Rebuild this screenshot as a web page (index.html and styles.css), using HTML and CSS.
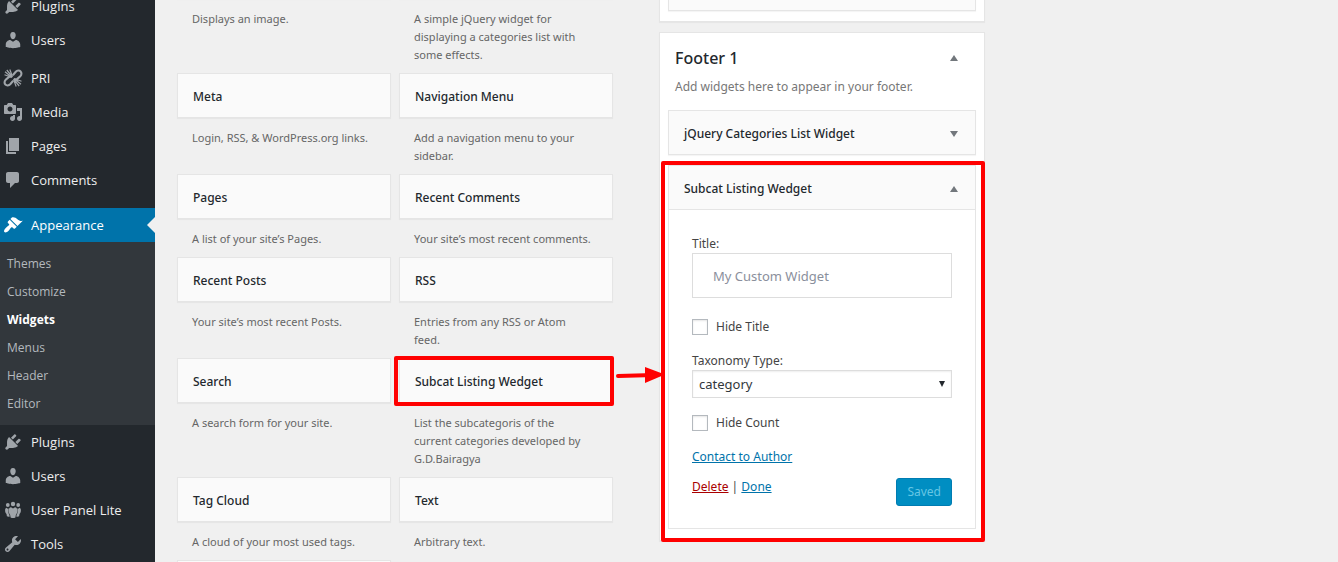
FILE: index.html
```
<!DOCTYPE html>
<html lang="en">
<head>
<meta charset="utf-8">
<title>Widgets</title>
<link rel="stylesheet" href="styles.css">
</head>
<body>
<svg class="sprite" aria-hidden="true">
  <symbol id="plugins" viewBox="0 0 20 20"><path d="M13.11 4.36L9.87 7.6 8 5.73l3.24-3.24c.35-.34 1.05-.2 1.56.32.52.51.66 1.21.31 1.55zm-8 1.77l.91-1.12 9.01 9.01-1.19.84c-.71.71-2.63 1.16-3.82 1.16H6.14L4.9 17.26c-.59.59-1.54.59-2.12 0-.59-.58-.59-1.53 0-2.12l1.24-1.24v-3.88c0-1.13.4-3.19 1.09-3.89zm7.26 3.97l3.24-3.24c.34-.35 1.04-.21 1.55.31.52.51.66 1.21.31 1.55l-3.24 3.25z"/></symbol>
  <symbol id="users" viewBox="0 0 20 20"><path d="M10 9.25c-2.27 0-2.73-3.44-2.73-3.44C7 4.02 7.82 2 9.97 2c2.16 0 2.98 2.02 2.71 3.81 0 0-.41 3.44-2.68 3.44zm0 2.57L12.72 10c2.39 0 4.52 2.33 4.52 4.53v2.49s-3.65 1.13-7.24 1.13c-3.65 0-7.24-1.13-7.24-1.13v-2.49c0-2.25 1.94-4.48 4.47-4.48z"/></symbol>
  <symbol id="unlink" viewBox="0 0 20 20"><g fill="none" stroke="currentColor"><path stroke-width="2.1" d="M9.800 7.200l3-3.500c1.300-1.400 3.600-1.500 4.800-.3s1.100 3.500-.3 4.800l-3 2.700c-.9.7-2 .8-2.900.3M10.200 12.800l-3 3.500c-1.300 1.400-3.600 1.500-4.800.3s-1.100-3.500.3-4.800l3-2.700c.9-.7 2-.8 2.900-.3"/><path stroke-width="1.200" d="M9.500 8.500L6.800 1.500M9.500 9L3.800 2M9 9.500L2 3.800M8.500 9.300L1.500 6.800M10.500 11.500l2.700 7M10.500 11l5.700 7M11 10.500l7 5.700M11.500 10.700l7 2.500"/></g></symbol>
  <symbol id="media" viewBox="0 0 20 20"><path d="M13 11V4c0-.55-.45-1-1-1h-1.670L9 1H5L3.670 3H2c-.55 0-1 .45-1 1v7c0 .55.45 1 1 1h10c.55 0 1-.45 1-1zM7 4.500c1.380 0 2.500 1.120 2.500 2.500S8.380 9.500 7 9.500 4.500 8.380 4.500 7 5.620 4.500 7 4.500zM14 6h5v10.500c0 1.380-1.120 2.500-2.500 2.500S14 17.880 14 16.500s1.120-2.500 2.500-2.500c.17 0 .34.02.5.05V9h-3V6zm-4 8.050V13h2v3.500c0 1.380-1.120 2.500-2.500 2.500S7 17.880 7 16.500 8.120 14 9.500 14c.17 0 .34.02.5.05z"/></symbol>
  <symbol id="pages" viewBox="0 0 20 20"><path d="M6 15V2h10v13H6zm-1 1h8v2H3V5h2v11z"/></symbol>
  <symbol id="comments" viewBox="0 0 20 20"><path d="M5 2h9c1.100 0 2 .9 2 2v7c0 1.100-.9 2-2 2h-2l-5 5v-5H5c-1.100 0-2-.9-2-2V4c0-1.100.9-2 2-2z"/></symbol>
  <symbol id="brush" viewBox="0 0 20 20"><path d="M14.48 11.06L7.41 3.99l1.5-1.5c.5-.56 2.3-.47 3.51.32 1.21.8 1.43 1.28 2.91 2.1 1.18.64 2.45 1.26 4.45.85zm-.71.71L6.7 4.7 4.93 6.47c-.39.39-.39 1.02 0 1.41l1.06 1.06c.39.39.39 1.03 0 1.42-.6.6-1.43 1.11-2.21 1.69-.35.26-.7.53-1.01.84C1.43 14.23.4 16.08 1.4 17.07c.99 1 2.84-.03 4.18-1.36.31-.31.58-.66.85-1.02.57-.78 1.08-1.61 1.69-2.21.39-.39 1.02-.39 1.41 0l1.06 1.06c.39.39 1.02.39 1.41 0z"/></symbol>
  <symbol id="groups" viewBox="0 0 20 20"><circle cx="10" cy="4" r="2.200"/><circle cx="4.800" cy="5" r="1.900"/><circle cx="15.200" cy="5" r="1.900"/><path d="M8 7.200l2 1.300 2-1.300c1.500.2 2.400 1.400 2.400 3 0 2.200-.7 3.600-1.500 4.500l-.5 2.700c-1.400.8-3.400.8-4.800 0l-.5-2.700c-.8-.9-1.500-2.300-1.500-4.500 0-1.600.9-2.800 2.400-3zM3.300 7.700l1.500 1 .8-.4c-.7 2.500-.3 5 .8 6.700l.3 1.500c-1 .3-2 .2-2.800-.3L3.500 14c-.9-.9-1.400-2-1.400-3.500 0-1.400.2-2.300 1.200-2.800zM16.700 7.700l-1.500 1-.8-.4c.7 2.500.3 5-.8 6.700l-.3 1.500c1 .3 2 .2 2.800-.3l.4-2.200c.9-.9 1.400-2 1.400-3.500 0-1.400-.2-2.300-1.200-2.800z"/></symbol>
  <symbol id="tools" viewBox="0 0 20 20"><path d="M16.68 9.77c-1.34 1.34-3.3 1.67-4.95.99l-5.41 6.52c-.99.99-2.59.99-3.58 0s-.99-2.59 0-3.57l6.52-5.42c-.68-1.65-.35-3.61.99-4.95 1.28-1.28 3.12-1.62 4.72-1.06l-2.89 2.89 2.82 2.82 2.86-2.87c.53 1.58.18 3.39-1.08 4.65zM3.81 16.21c.4.39 1.04.39 1.43 0 .4-.4.4-1.04 0-1.43-.39-.4-1.03-.4-1.43 0-.39.39-.39 1.03 0 1.43z"/></symbol>
</svg>
<div class="app">
  <nav class="menu">
    <a class="item" href="#"><svg class="icon"><use href="#plugins"/></svg>Plugins</a>
    <a class="item" href="#"><svg class="icon"><use href="#users"/></svg>Users</a>
    <div class="gap-small"></div>
    <a class="item" href="#"><svg class="icon"><use href="#unlink"/></svg>PRI</a>
    <a class="item" href="#"><svg class="icon"><use href="#media"/></svg>Media</a>
    <a class="item" href="#"><svg class="icon"><use href="#pages"/></svg>Pages</a>
    <a class="item" href="#"><svg class="icon"><use href="#comments"/></svg>Comments</a>
    <div class="gap-large"></div>
    <a class="item current" href="#"><svg class="icon"><use href="#brush"/></svg>Appearance</a>
    <div class="submenu">
      <a href="#">Themes</a>
      <a href="#">Customize</a>
      <a class="active" href="#">Widgets</a>
      <a href="#">Menus</a>
      <a href="#">Header</a>
      <a href="#">Editor</a>
    </div>
    <a class="item" href="#"><svg class="icon"><use href="#plugins"/></svg>Plugins</a>
    <a class="item" href="#"><svg class="icon"><use href="#users"/></svg>Users</a>
    <a class="item" href="#"><svg class="icon"><use href="#groups"/></svg>User Panel Lite</a>
    <a class="item" href="#"><svg class="icon"><use href="#tools"/></svg>Tools</a>
  </nav>

  <main class="content">
    <section class="available">
      <article><h3 class="card"></h3><p class="about">Displays an image.</p></article>
      <article><h3 class="card"></h3><p class="about">A simple jQuery widget for displaying a categories list with some effects.</p></article>
      <article><h3 class="card">Meta</h3><p class="about">Login, RSS, &amp; WordPress.org links.</p></article>
      <article><h3 class="card">Navigation Menu</h3><p class="about">Add a navigation menu to your sidebar.</p></article>
      <article><h3 class="card">Pages</h3><p class="about">A list of your site’s Pages.</p></article>
      <article><h3 class="card">Recent Comments</h3><p class="about">Your site’s most recent comments.</p></article>
      <article><h3 class="card">Recent Posts</h3><p class="about">Your site’s most recent Posts.</p></article>
      <article><h3 class="card">RSS</h3><p class="about">Entries from any RSS or Atom feed.</p></article>
      <article><h3 class="card">Search</h3><p class="about">A search form for your site.</p></article>
      <article>
        <h3 class="card marked">Subcat Listing Wedget
          <svg class="arrow" viewBox="0 0 50 18" aria-hidden="true"><path class="shaft" d="M6 10L33 9.300"/><path class="head" d="M33 1L53 8.500L33 17z"/></svg>
        </h3>
        <p class="about">List the subcategoris of the current categories developed by G.D.Bairagya</p>
      </article>
      <article><h3 class="card">Tag Cloud</h3><p class="about">A cloud of your most used tags.</p></article>
      <article><h3 class="card">Text</h3><p class="about">Arbitrary text.</p></article>
      <article><h3 class="card"></h3></article>
    </section>

    <div class="areas">
      <section class="area area-above"><h3 class="card"></h3></section>
      <section class="area">
        <header class="area-head">
          <h2>Footer 1</h2>
          <button class="toggle" aria-label="Collapse Footer 1"><svg class="tri" viewBox="0 0 8 6"><path d="M4 0L8 6H0z"/></svg></button>
        </header>
        <p class="area-about">Add widgets here to appear in your footer.</p>
        <h3 class="card">jQuery Categories List Widget
          <button class="toggle" aria-label="Expand jQuery Categories List Widget"><svg class="tri" viewBox="0 0 8 6"><path d="M0 0H8L4 6z"/></svg></button>
        </h3>
        <div class="widget">
          <h3 class="widget-head">Subcat Listing Wedget
            <button class="toggle" aria-label="Collapse Subcat Listing Wedget"><svg class="tri" viewBox="0 0 8 6"><path d="M4 0L8 6H0z"/></svg></button>
          </h3>
          <form class="form">
            <label for="title">Title:</label>
            <input class="text" id="title" type="text" placeholder="My Custom Widget">
            <div class="check check-title"><input id="hide-title" type="checkbox"><label for="hide-title">Hide Title</label></div>
            <label for="taxonomy">Taxonomy Type:</label>
            <div class="select-wrap">
              <select id="taxonomy"><option>category</option></select>
              <svg class="caret" viewBox="0 0 6 6" aria-hidden="true"><path d="M0 0H6L3 6z"/></svg>
            </div>
            <div class="check"><input id="hide-count" type="checkbox"><label for="hide-count">Hide Count</label></div>
            <p class="contact"><a href="#">Contact to Author</a></p>
            <div class="actions">
              <div><a class="delete" href="#">Delete</a> | <a href="#">Done</a></div>
              <button class="save" type="button" disabled>Saved</button>
            </div>
          </form>
        </div>
      </section>
    </div>
  </main>
</div>
</body>
</html>
```
FILE: styles.css
```
* { box-sizing: border-box; }
body {
  margin: 0;
  height: 100vh;
  overflow: hidden;
  background: #f0f0f0;
  color: #444;
  font: 12px/18px "Noto Sans", "Open Sans", sans-serif;
}
h2, h3, p { margin: 0; }
a { color: #0073aa; }
.sprite { display: none; }
.app { display: flex; align-items: flex-start; }

/* Admin menu, scrolled part of a row up */
.menu {
  flex: none;
  width: 155px;
  min-height: calc(100vh + 11px);
  margin-top: -11px;
  background: #23282d;
  font-family: "Open Sans", "Noto Sans", sans-serif;
}
.item {
  display: flex;
  align-items: center;
  gap: 8px;
  height: 34px;
  padding-left: 3px;
  color: #eee;
  font-size: 13px;
  text-decoration: none;
}
.icon { width: 20px; height: 20px; color: #a0a5aa; fill: currentColor; }
.gap-small { height: 4px; }
.gap-large { height: 11px; }
.current { position: relative; background: #0073aa; color: #fff; }
.current .icon { color: #fff; }
.current::after {
  content: "";
  position: absolute;
  right: 0;
  top: 9px;
  border: 8px solid transparent;
  border-left: 0;
  border-right-color: #f0f0f0;
}
.submenu { padding: 8px 0 7px; background: #32373c; }
.submenu a {
  display: block;
  padding-left: 7px;
  color: #b4b9be;
  font-size: 12px;
  line-height: 28px;
  text-decoration: none;
}
.submenu .active { color: #fff; font-weight: 700; }

.content {
  flex: 1;
  display: grid;
  grid-template-columns: 436fr 326fr 307fr;
  column-gap: 46px;
  align-items: start;
  margin-top: -46px;
  padding-left: 22px;
}
.available { display: grid; grid-template-columns: 1fr 1fr; column-gap: 8px; }
.card, .widget-head {
  position: relative;
  display: flex;
  align-items: center;
  justify-content: space-between;
  height: 45px;
  padding: 2px 15px 0;
  border: 1px solid #e5e5e5;
  background: #fafafa;
  color: #23282d;
  font-size: 12px;
  font-weight: 500;
}
.card { box-shadow: 0 1px 1px rgba(0, 0, 0, .04); }
.about { padding: 11px 20px 9px 15px; color: #666; font-size: 11px; }

.marked::after, .widget::after {
  content: "";
  position: absolute;
  border: 4px solid #f00;
  border-radius: 2px;
  pointer-events: none;
}
.marked::after { inset: -3px -2px -4px -6px; }
.widget::after { inset: -5px -10px -14px -8px; }
.arrow { position: absolute; z-index: 1; left: 100%; top: 7px; width: 50px; height: 18px; overflow: visible; }
.shaft { stroke: #f00; stroke-width: 4; stroke-linecap: round; }
.head { fill: #f00; }

.area {
  margin-bottom: 10px;
  padding: 0 8px 11px;
  border: 1px solid #e5e5e5;
  background: #fff;
  box-shadow: 0 1px 1px rgba(0, 0, 0, .04);
}
.area-above { padding: 11px 8px 10px; }
.area-head {
  display: flex;
  align-items: center;
  justify-content: space-between;
  padding: 14px 18px 8px 7px;
}
.area h2 { color: #23282d; font-size: 16px; line-height: 22px; font-weight: 500; }
.area-about { padding: 1px 7px 14px; color: #777; }
.toggle { display: flex; padding: 0; border: 0; background: none; }
.card .toggle, .widget-head .toggle { margin-right: 2px; }
.tri { width: 8px; height: 6px; fill: #72777c; }

.widget { position: relative; margin-top: 10px; border: 1px solid #e5e5e5; }
.widget-head { height: 44px; border-width: 0 0 1px; }
.form { padding: 25px 23px; }
.form label { display: block; }
.text {
  display: block;
  width: 100%;
  height: 45px;
  padding: 0 20px;
  border: 1px solid #ddd;
  background: #fff;
  font: inherit;
  font-size: 13px;
}
.text::placeholder { color: #8a8f9c; opacity: 1; }
.check { display: flex; align-items: center; gap: 8px; margin: 16px 0; }
.check-title { margin-top: 20px; }
.check input {
  appearance: none;
  width: 16px;
  height: 16px;
  margin: 0;
  border: 1px solid #b4b9be;
  background: #fff;
  box-shadow: inset 0 1px 2px rgba(0, 0, 0, .1);
}
.select-wrap { position: relative; }
.select-wrap select {
  appearance: none;
  display: block;
  width: 100%;
  height: 28px;
  padding: 0 6px;
  border: 1px solid #ddd;
  border-radius: 0;
  background: #fff;
  box-shadow: inset 0 1px 2px rgba(0, 0, 0, .07);
  color: #32373c;
  font: inherit;
  font-size: 13px;
}
.caret { position: absolute; right: 7px; top: 11px; width: 6px; height: 6px; fill: #23282d; }
.actions { display: flex; justify-content: space-between; margin: 12px 0 -3px; }
.delete { color: #a00; }
.save {
  height: 28px;
  padding: 0 10px;
  border: 1px solid #007cb2;
  border-radius: 3px;
  background: #008ec2;
  color: #66c6e4;
  font: inherit;
}
```
